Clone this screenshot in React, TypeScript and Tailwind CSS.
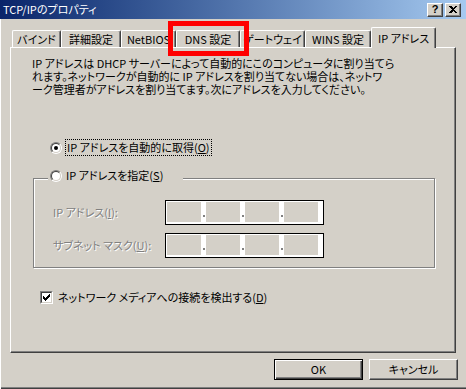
import React from 'react';

function Radio({ checked }: { checked?: boolean }) {
  return (
    <div className="w-[12px] h-[12px] rounded-full border border-t-[#808080] border-l-[#808080] border-r-white border-b-white shrink-0">
      <div className="w-[10px] h-[10px] rounded-full border border-t-[#404040] border-l-[#404040] border-r-[#d4d0c8] border-b-[#d4d0c8] bg-white flex items-center justify-center">
        {checked && <div className="w-[4px] h-[4px] rounded-full bg-black" />}
      </div>
    </div>
  );
}

function CheckBox() {
  return (
    <div className="w-[13px] h-[13px] border border-t-[#808080] border-l-[#808080] border-r-white border-b-white shrink-0">
      <div className="w-[11px] h-[11px] border border-t-[#404040] border-l-[#404040] border-r-[#d4d0c8] border-b-[#d4d0c8] bg-white">
        <svg width="9" height="9" viewBox="0 0 9 9" shapeRendering="crispEdges" className="block">
          <rect x="1" y="3" width="1" height="3" fill="#000" />
          <rect x="2" y="4" width="1" height="3" fill="#000" />
          <rect x="3" y="5" width="1" height="3" fill="#000" />
          <rect x="4" y="4" width="1" height="3" fill="#000" />
          <rect x="5" y="3" width="1" height="3" fill="#000" />
          <rect x="6" y="2" width="1" height="3" fill="#000" />
          <rect x="7" y="1" width="1" height="3" fill="#000" />
        </svg>
      </div>
    </div>
  );
}

function IpField() {
  return (
    <div className="w-[159px] h-[25px] border border-black bg-white pt-[1px] pl-[1px] flex">
      {[0, 1, 2, 3].map((i) => (
        <React.Fragment key={i}>
          <div className="w-[34px] h-[20px] bg-[#d4d0c8]" />
          {i < 3 && (
            <div className="w-[5px] h-[20px] flex items-end justify-center pb-[5px]">
              <div className="w-[2px] h-[2px] bg-[#808080]" />
            </div>
          )}
        </React.Fragment>
      ))}
    </div>
  );
}

const tabs = [
  { label: 'バインド', cls: 'w-[49px]' },
  { label: '詳細設定', cls: 'w-[60px]' },
  { label: 'NetBIOS', cls: 'w-[55px]' },
  { label: 'DNS 設定', cls: 'w-[64px]' },
  { label: 'ゲートウェイ', cls: 'w-[65px]' },
  { label: 'WINS 設定', cls: 'w-[66px]' },
];

export default function App() {
  return (
    <div className="w-[466px] h-[389px] bg-[#d4d0c8] flex flex-col relative overflow-hidden text-[11px] leading-[13px] text-black font-['Noto_Sans_CJK_JP','Noto_Sans',sans-serif] [font-feature-settings:'palt'] shadow-[inset_1px_0_#ffffff,inset_0_-1px_#404040,inset_0_-2px_#808080]">
      {/* Title bar */}
      <div className="h-[19px] shrink-0 bg-gradient-to-r from-[#0a246a] to-[#a6caf0] flex items-center pl-[3px] pr-[5px]">
        <span className="text-white">TCP/IPのプロパティ</span>
        <div className="ml-auto flex gap-[2px]">
          <div className="w-[16px] h-[14px] bg-[#d4d0c8] border border-t-white border-l-white border-r-[#404040] border-b-[#404040] shadow-[inset_-1px_-1px_#808080] flex items-center justify-center">
            <span className="font-['Liberation_Sans',sans-serif] font-bold text-[11px] leading-[11px] text-black">?</span>
          </div>
          <div className="w-[16px] h-[14px] bg-[#d4d0c8] border border-t-white border-l-white border-r-[#404040] border-b-[#404040] shadow-[inset_-1px_-1px_#808080] flex items-center justify-center">
            <svg width="8" height="7" viewBox="0 0 8 7" shapeRendering="crispEdges" className="block">
              <path d="M0 0h2l2 2 2-2h2v1L5 3.5 8 6v1H6L4 5 2 7H0V6l3-2.5L0 1z" fill="#000" />
            </svg>
          </div>
        </div>
      </div>

      {/* Tabs */}
      <div className="mt-[8px] h-[20px] flex items-end pl-[12px] shrink-0">
        {tabs.map((t) => (
          <div
            key={t.label}
            className={`${t.cls} h-[17px] border-t border-l border-r border-t-white border-l-white border-r-[#404040] shadow-[inset_-1px_0_#808080] rounded-t-[2px] flex items-center justify-center whitespace-nowrap`}
          >
            {t.label}
          </div>
        ))}
        <div className="w-[65px] h-[21px] -mb-[1px] relative z-10 bg-[#d4d0c8] border-t border-l border-r border-t-white border-l-white border-r-[#404040] shadow-[inset_-1px_0_#808080] rounded-t-[2px] flex items-center justify-center whitespace-nowrap">
          IP アドレス
        </div>
      </div>

      {/* Panel */}
      <div className="ml-[10px] w-[446px] h-[306px] shrink-0 border border-t-white border-l-white border-r-[#404040] border-b-[#404040] shadow-[inset_-1px_-1px_#808080] flex flex-col pl-[21px] pt-[9px]">
        <p className="whitespace-nowrap">
          IP アドレスは DHCP サーバーによって自動的にこのコンピュータに割り当てら
          <br />
          れます。ネットワークが自動的に IP アドレスを割り当てない場合は、ネットワ
          <br />
          ーク管理者がアドレスを割り当てます。次にアドレスを入力してください。
        </p>

        <div className="mt-[43px] h-[17px] flex items-center">
          <div className="ml-[18px]">
            <Radio checked />
          </div>
          <div className="ml-[3px] w-[147px] h-[17px] border border-dotted border-black flex items-center pl-[1px] whitespace-nowrap">
            IP アドレスを自動的に取得(<span className="underline">O</span>)
          </div>
        </div>

        <div className="mt-[22px] ml-[1px] w-[402px] border border-[#808080] shadow-[inset_1px_1px_#ffffff,1px_1px_#ffffff] flex flex-col pb-[9px]">
          <div className="-mt-[12px] ml-[14px] w-[135px] h-[17px] bg-[#d4d0c8] flex items-center pl-[2px] whitespace-nowrap">
            <Radio />
            <span className="ml-[4px]">
              IP アドレスを指定(<span className="underline">S</span>)
            </span>
          </div>
          <div className="mt-[16px] ml-[19px] flex items-center">
            <div className="w-[112px] text-[#808080] [text-shadow:1px_1px_0_#ffffff] whitespace-nowrap">
              IP アドレス(<span className="underline">I</span>):
            </div>
            <IpField />
          </div>
          <div className="mt-[8px] ml-[19px] flex items-center">
            <div className="w-[112px] text-[#808080] [text-shadow:1px_1px_0_#ffffff] whitespace-nowrap">
              サブネット マスク(<span className="underline">U</span>):
            </div>
            <IpField />
          </div>
        </div>

        <div className="mt-[23px] ml-[8px] flex items-center">
          <CheckBox />
          <span className="ml-[5px] whitespace-nowrap">
            ネットワーク メディアへの接続を検出する(<span className="underline">D</span>)
          </span>
        </div>
      </div>

      {/* Buttons */}
      <div className="mt-[6px] flex justify-end gap-[6px] pr-[8px]">
        <div className="w-[89px] h-[21px] border border-black shadow-[inset_1px_1px_#ffffff,inset_-1px_-1px_#404040,inset_-2px_-2px_#808080] flex items-center justify-center">
          OK
        </div>
        <div className="w-[89px] h-[21px] border border-t-white border-l-white border-r-[#404040] border-b-[#404040] shadow-[inset_-1px_-1px_#808080] flex items-center justify-center">
          キャンセル
        </div>
      </div>

      {/* Red annotation box */}
      <div className="absolute left-[168px] top-[21px] w-[81px] h-[35px] border-[5px] border-[#ff0000]" />
    </div>
  );
}
